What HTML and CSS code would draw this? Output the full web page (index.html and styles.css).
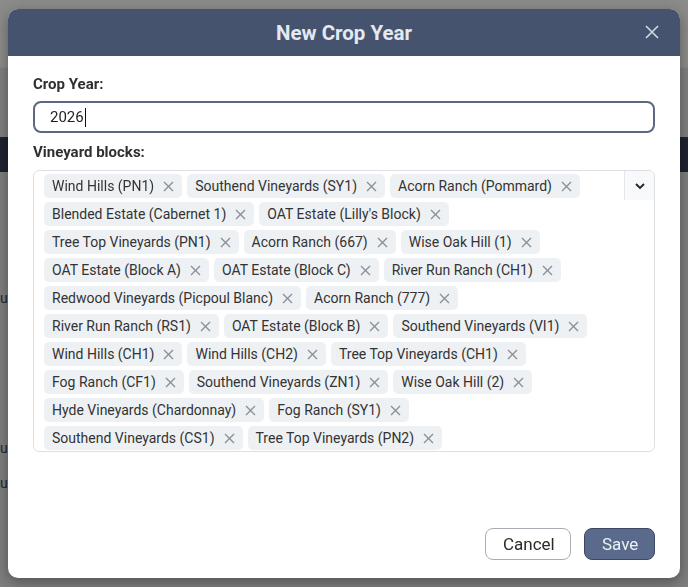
FILE: index.html
```html
<!DOCTYPE html>
<html lang="en">
<head>
    <meta charset="UTF-8">
    <meta name="viewport" content="width=device-width, initial-scale=1.0">
    <title>New Crop Year</title>
    <link rel="stylesheet" href="styles.css">
</head>
<body>
    <div class="page">
        <div class="page-top"></div>
        <div class="page-nav"></div>
        <div class="page-bar"></div>
        <div class="page-row row-a">uv</div>
        <div class="page-row row-b">uv</div>
        <div class="page-row row-c">uv</div>
    </div>

    <div class="overlay">
        <div class="modal">
            <div class="modal-header">
                <h2>New Crop Year</h2>
                <button class="close" aria-label="Close">
                    <svg width="14" height="14" viewBox="0 0 14 14"><path d="M1 1L13 13M13 1L1 13" stroke="currentColor" stroke-width="1.6" fill="none"/></svg>
                </button>
            </div>

            <div class="modal-body">
                <div class="form-group">
                    <label for="crop_year">Crop Year:</label>
                    <div class="year-input"><span id="crop_year">2026</span><span class="caret"></span></div>
                </div>
                <div class="form-group">
                    <label>Vineyard blocks:</label>
                    <div class="multi">
                        <div class="chips" id="chips"></div>
                        <div class="indicator">
                            <svg width="12" height="8" viewBox="0 0 12 8"><path d="M2 2L6 6L10 2" stroke="#222" stroke-width="1.8" fill="none"/></svg>
                        </div>
                    </div>
                </div>
            </div>

            <div class="modal-footer">
                <button class="btn btn-cancel">Cancel</button>
                <button class="btn btn-save">Save</button>
            </div>
        </div>
    </div>

    <script>
        const blocks = [
            'Wind Hills (PN1)', 'Southend Vineyards (SY1)', 'Acorn Ranch (Pommard)',
            'Blended Estate (Cabernet 1)', "OAT Estate (Lilly's Block)",
            'Tree Top Vineyards (PN1)', 'Acorn Ranch (667)', 'Wise Oak Hill (1)',
            'OAT Estate (Block A)', 'OAT Estate (Block C)', 'River Run Ranch (CH1)',
            'Redwood Vineyards (Picpoul Blanc)', 'Acorn Ranch (777)',
            'River Run Ranch (RS1)', 'OAT Estate (Block B)', 'Southend Vineyards (VI1)',
            'Wind Hills (CH1)', 'Wind Hills (CH2)', 'Tree Top Vineyards (CH1)',
            'Fog Ranch (CF1)', 'Southend Vineyards (ZN1)', 'Wise Oak Hill (2)',
            'Hyde Vineyards (Chardonnay)', 'Fog Ranch (SY1)',
            'Southend Vineyards (CS1)', 'Tree Top Vineyards (PN2)'
        ];
        const chips = document.getElementById('chips');
        blocks.forEach(function (name) {
            const chip = document.createElement('span');
            chip.className = 'chip';
            chip.innerHTML = '<span class="chip-label"></span>' +
                '<svg class="chip-x" width="11" height="11" viewBox="0 0 11 11"><path d="M1 1L10 10M10 1L1 10" stroke="currentColor" stroke-width="1.4" fill="none"/></svg>';
            chip.querySelector('.chip-label').textContent = name;
            chips.appendChild(chip);
        });
    </script>
</body>
</html>
```

FILE: styles.css
```css
* { box-sizing: border-box; }
body { margin: 0; font-family: Roboto, "Liberation Sans", sans-serif; color: #2b2b2b; background: #7e7e7e; }

.page { height: 587px; overflow: hidden; }
.page-top { height: 67px; background: #8b8b8a; }
.page-nav { height: 70px; background: #7f7f7f; border-top: 1px solid #878787; }
.page-bar { height: 35px; background: #1e2330; }
.page-row { font-size: 14px; color: #262626; height: 20px; }
.row-a { margin-top: 118px; }
.row-b { margin-top: 130px; }
.row-c { margin-top: 15px; }

.overlay { position: fixed; inset: 0; }
.modal {
    position: absolute; left: 8px; top: 9px; width: 672px; height: 569px;
    background: #fff; border-radius: 10px; display: flex; flex-direction: column;
    box-shadow: 0 4px 14px rgba(0, 0, 0, 0.35); overflow: hidden;
}

.modal-header {
    height: 47px; background: #46536f; position: relative;
    display: flex; align-items: center; justify-content: center;
}
.modal-header h2 { margin: 0; font-size: 20.5px; font-weight: 700; color: #e4e8ef; }
.close {
    position: absolute; right: 21px; top: 16px; background: none; border: none;
    padding: 0; color: #d3d8e1; width: 14px; height: 14px; display: flex;
}

.modal-body { flex: 1; padding: 18px 25px 0; }
.form-group { margin-bottom: 9px; }
label { display: block; font-size: 15px; font-weight: 700; line-height: 20px; margin-bottom: 7px; color: #2f2f2f; }
.form-group + .form-group label { margin-bottom: 8px; }

.year-input {
    height: 32px; border: 2px solid #5b6783; border-radius: 8px;
    padding: 0 15px; display: flex; align-items: center; font-size: 15px; color: #1f1f1f;
}
.caret { width: 1px; height: 19px; background: #111; margin-left: 1px; }

.multi {
    height: 282px; border: 1px solid #dcdfe4; border-radius: 6px; display: flex;
}
.chips {
    flex: 1; display: flex; flex-wrap: wrap; align-content: flex-start;
    gap: 4px 5px; padding: 3px 30px 0 10px;
}
.chip {
    height: 24px; background: #eef1f4; border-radius: 5px; display: inline-flex;
    align-items: center; padding: 0 8px; font-size: 14px; color: #333;
}
.chip-x { margin-left: 9px; color: #8c9097; }
.indicator {
    width: 30px; height: 29px; border-left: 1px solid #e4e6ea; background: #f8f9fb;
    display: flex; align-items: center; justify-content: center; border-top-right-radius: 6px;
}

.modal-footer { display: flex; justify-content: flex-end; gap: 13px; padding: 0 25px 18px; }
.btn {
    height: 32px; border-radius: 8px; font-family: inherit; font-size: 17px; padding: 0 17px;
}
.btn-cancel { background: #fff; border: 1px solid #a9adb3; color: #2b2b2b; width: 86px; }
.btn-save { background: #5a6a8d; border: 1px solid #3e4862; color: #eef1f6; width: 71px; }
```
